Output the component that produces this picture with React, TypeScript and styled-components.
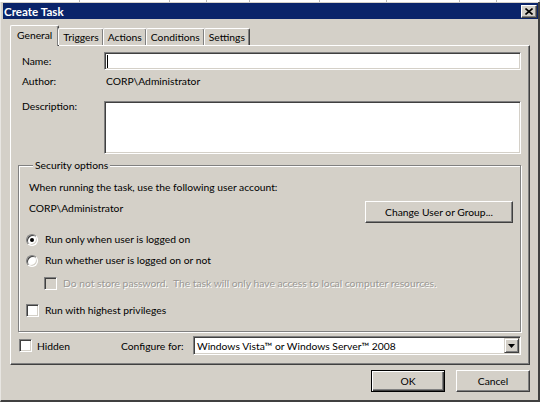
import React from "react";
import styled, { createGlobalStyle } from "styled-components";

const FACE = "#d4d0c8";
const SHADOW = "#808080";
const DARK = "#404040";

const GlobalStyle = createGlobalStyle`
  html, body {
    margin: 0;
    padding: 0;
    background: #ffffff;
  }
  body {
    font-family: Lato, "Liberation Sans", sans-serif;
    font-size: 10.3px;
    color: #000;
  }
  * {
    box-sizing: border-box;
  }
`;

const Screen = styled.div`
  width: 540px;
  height: 402px;
  display: flex;
  flex-direction: column;
  overflow: hidden;
`;

const Strip = styled.div`
  height: 2px;
  display: flex;
  background: #fff;
`;

const StripSeg = styled.div<{ $w: number }>`
  width: ${(p) => p.$w}px;
  border-right: 1px solid #b8b8b8;
`;

const Frame = styled.div`
  flex: 1;
  display: flex;
  flex-direction: column;
  background: ${FACE};
  border-left: 1px solid #e8e6e2;
  border-right: 2px solid ${DARK};
  border-bottom: 2px solid ${DARK};
  padding: 1px 0 0 2px;
`;

const TitleBar = styled.div`
  height: 16px;
  background: #0a246a;
  display: flex;
  align-items: center;
  justify-content: space-between;
  padding: 0 1px 0 1px;
`;

const Title = styled.span`
  color: #fff;
  font-weight: 700;
  font-size: 11.6px;
`;

const CloseBtn = styled.div`
  width: 16px;
  height: 13px;
  background: ${FACE};
  border: 1px solid;
  border-color: #fff ${DARK} ${DARK} #fff;
  box-shadow: inset -1px -1px ${SHADOW};
  display: flex;
  align-items: center;
  justify-content: center;
`;

const Body = styled.div`
  flex: 1;
  display: flex;
  flex-direction: column;
  padding: 7px 8px 0 7px;
`;

const TabStrip = styled.div`
  display: flex;
  align-items: flex-end;
  height: 19px;
  position: relative;
  z-index: 1;
`;

const Tab = styled.div<{ $active?: boolean }>`
  height: ${(p) => (p.$active ? "21px" : "17px")};
  margin-bottom: ${(p) => (p.$active ? "-1px" : "0")};
  margin-left: ${(p) => (p.$active ? "0" : "-1px")};
  padding: 0 ${(p) => (p.$active ? "6px" : "4px")};
  display: flex;
  align-items: ${(p) => (p.$active ? "flex-start" : "center")};
  padding-top: ${(p) => (p.$active ? "3px" : "0")};
  background: ${FACE};
  border-top: 1px solid #fff;
  border-left: 1px solid #fff;
  border-right: 1px solid ${DARK};
  border-radius: 2px 2px 0 0;
  box-shadow: inset -1px 0 ${SHADOW};
  white-space: nowrap;
  &:first-child {
    margin-left: 0;
  }
`;

const Panel = styled.div`
  height: 320px;
  border: 1px solid;
  border-color: #fff ${DARK} ${DARK} #fff;
  box-shadow: inset -1px -1px ${SHADOW};
  padding: 6px 8px 0 7px;
  display: flex;
  flex-direction: column;
`;

const FormGrid = styled.div`
  display: grid;
  grid-template-columns: 82px 1fr;
  row-gap: 2px;
  padding-left: 4px;
`;

const Label = styled.div<{ $top?: boolean }>`
  display: flex;
  align-items: ${(p) => (p.$top ? "flex-start" : "center")};
  margin-top: ${(p) => (p.$top ? "-1px" : "0")};
`;

const Value = styled.div`
  display: flex;
  align-items: center;
  height: 18px;
  padding-left: 2px;
`;

const Sunken = styled.div<{ $h: number }>`
  height: ${(p) => p.$h}px;
  background: #fff;
  border: 1px solid;
  border-color: ${SHADOW} #fff #fff ${SHADOW};
  box-shadow: inset 1px 1px ${DARK}, inset -1px -1px ${FACE};
  display: flex;
  align-items: center;
  padding: 0 3px;
`;

const Caret = styled.span`
  width: 1px;
  height: 13px;
  background: #000;
  margin-left: -1px;
`;

const Spacer = styled.div<{ $h: number }>`
  grid-column: 1 / span 2;
  height: ${(p) => p.$h}px;
`;

const Group = styled.fieldset`
  margin: 4px 0 0 0;
  padding: 8px 7px 13px 7px;
  min-width: 0;
  border: 1px solid ${SHADOW};
  box-shadow: inset 1px 1px #fff, 1px 1px #fff;
  display: flex;
  flex-direction: column;
`;

const Legend = styled.legend`
  margin-left: 7px;
  padding: 0 2px;
  background: ${FACE};
  line-height: 14px;
`;

const Text = styled.div<{ $muted?: boolean }>`
  padding-left: 3px;
  line-height: 15px;
  color: ${(p) => (p.$muted ? "#9a9894" : "#000")};
  text-shadow: ${(p) => (p.$muted ? "1px 1px 0 #fff" : "none")};
  white-space: nowrap;
`;

const AccountRow = styled.div`
  display: flex;
  justify-content: space-between;
  align-items: flex-start;
  margin-top: 6px;
`;

const Button = styled.div<{ $w: number; $default?: boolean }>`
  width: ${(p) => p.$w}px;
  height: 22px;
  display: flex;
  align-items: center;
  justify-content: center;
  background: ${FACE};
  border: 1px solid;
  border-color: ${(p) => (p.$default ? "#000" : `#fff ${DARK} ${DARK} #fff`)};
  box-shadow: ${(p) =>
    p.$default
      ? `inset 1px 1px #fff, inset -1px -1px ${DARK}, inset -2px -2px ${SHADOW}`
      : `inset -1px -1px ${SHADOW}`};
`;

const Option = styled.div<{ $indent?: number; $gap: number }>`
  display: flex;
  align-items: center;
  height: 15px;
  gap: 3px;
  margin-top: ${(p) => p.$gap}px;
  padding-left: ${(p) => p.$indent ?? 0}px;
`;

const Radio = styled.span<{ $checked?: boolean }>`
  width: 12px;
  height: 12px;
  border-radius: 50%;
  background: #fff;
  border: 1px solid;
  border-color: ${SHADOW} #fff #fff ${SHADOW};
  box-shadow: inset 1px 1px ${DARK}, inset -1px -1px ${FACE};
  display: flex;
  align-items: center;
  justify-content: center;
  margin-right: 1px;
  &::after {
    content: "";
    width: 4px;
    height: 4px;
    border-radius: 50%;
    background: ${(p) => (p.$checked ? "#000" : "transparent")};
  }
`;

const Check = styled.span<{ $disabled?: boolean }>`
  width: 13px;
  height: 13px;
  background: ${(p) => (p.$disabled ? FACE : "#fff")};
  border: 1px solid;
  border-color: ${SHADOW} #fff #fff ${SHADOW};
  box-shadow: inset 1px 1px ${DARK}, inset -1px -1px ${FACE};
`;

const BottomRow = styled.div`
  display: flex;
  align-items: center;
  margin-top: 4px;
  padding-left: 1px;
`;

const HiddenLabel = styled.span`
  margin-left: 5px;
  width: 84px;
`;

const ConfigLabel = styled.span`
  width: 72px;
  white-space: nowrap;
`;

const Select = styled(Sunken)`
  flex: 1;
  justify-content: space-between;
  padding: 0 1px 0 3px;
  white-space: nowrap;
`;

const DropBtn = styled.div`
  width: 15px;
  height: 15px;
  background: ${FACE};
  border: 1px solid;
  border-color: ${FACE} ${DARK} ${DARK} ${FACE};
  box-shadow: inset 1px 1px #fff, inset -1px -1px ${SHADOW};
  display: flex;
  align-items: center;
  justify-content: center;
`;

const Footer = styled.div`
  display: flex;
  justify-content: flex-end;
  gap: 11px;
  margin-top: 5px;
`;

const stripSegs = [80, 90, 37, 43, 70, 67, 73, 37, 43];

export default function App() {
  return (
    <>
      <GlobalStyle />
      <Screen>
        <Strip>
          {stripSegs.map((w, i) => (
            <StripSeg key={i} $w={w} />
          ))}
        </Strip>
        <Frame>
          <TitleBar>
            <Title>Create Task</Title>
            <CloseBtn>
              <svg width="8" height="7" viewBox="0 0 8 7">
                <path d="M0.5 0.5 L7.5 6.5 M7.5 0.5 L0.5 6.5" stroke="#000" strokeWidth="1.6" />
              </svg>
            </CloseBtn>
          </TitleBar>
          <Body>
            <TabStrip>
              <Tab $active>General</Tab>
              <Tab>Triggers</Tab>
              <Tab>Actions</Tab>
              <Tab>Conditions</Tab>
              <Tab>Settings</Tab>
            </TabStrip>
            <Panel>
              <FormGrid>
                <Label>Name:</Label>
                <Sunken $h={18}>
                  <Caret />
                </Sunken>
                <Label>Author:</Label>
                <Value>CORP\Administrator</Value>
                <Spacer $h={7} />
                <Label $top>Description:</Label>
                <Sunken $h={53} />
              </FormGrid>
              <Group>
                <Legend>Security options</Legend>
                <Text>When running the task, use the following user account:</Text>
                <AccountRow>
                  <Text>CORP\Administrator</Text>
                  <Button $w={148}>Change User or Group...</Button>
                </AccountRow>
                <Option $gap={9}>
                  <Radio $checked />
                  <Text>Run only when user is logged on</Text>
                </Option>
                <Option $gap={6}>
                  <Radio />
                  <Text>Run whether user is logged on or not</Text>
                </Option>
                <Option $gap={8} $indent={18}>
                  <Check $disabled />
                  <Text $muted>Do not store password.&nbsp; The task will only have access to local computer resources.</Text>
                </Option>
                <Option $gap={12}>
                  <Check />
                  <Text>Run with highest privileges</Text>
                </Option>
              </Group>
              <BottomRow>
                <Check />
                <HiddenLabel>Hidden</HiddenLabel>
                <ConfigLabel>Configure for:</ConfigLabel>
                <Select $h={19}>
                  <span>Windows Vista™ or Windows Server™ 2008</span>
                  <DropBtn>
                    <svg width="7" height="4" viewBox="0 0 7 4">
                      <path d="M0 0 H7 L3.5 4 Z" fill="#000" />
                    </svg>
                  </DropBtn>
                </Select>
              </BottomRow>
            </Panel>
            <Footer>
              <Button $w={74} $default>OK</Button>
              <Button $w={74}>Cancel</Button>
            </Footer>
          </Body>
        </Frame>
      </Screen>
    </>
  );
}
